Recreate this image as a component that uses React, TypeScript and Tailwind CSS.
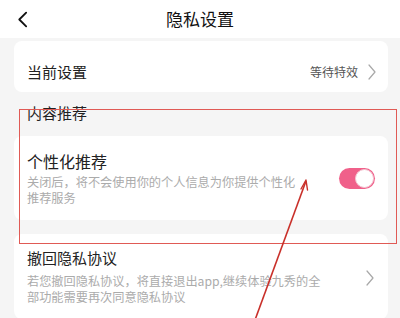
import { Fragment } from 'react';

const FONT = { fontFamily: '"Noto Sans CJK SC", "Noto Sans", sans-serif' };

const Chevron = ({ className }: { className: string }) => (
  <svg viewBox="0 0 8 16" className={className} fill="none">
    <path d="M1 1l6 7-6 7" stroke="#a8a8a8" strokeWidth="1.2" strokeLinecap="round" strokeLinejoin="round" />
  </svg>
);

const Toggle = ({ on }: { on: boolean }) => (
  <div
    className={`flex h-[21px] w-[36px] shrink-0 items-center rounded-full p-[1px] ${
      on ? 'justify-end bg-[#f0608a]' : 'justify-start bg-[#e5e5e5]'
    }`}
  >
    <div className="h-[19px] w-[19px] rounded-full border border-[#f3c7d3] bg-white" />
  </div>
);

export default function App() {
  return (
    <div style={FONT} className="relative h-[318px] w-[400px] overflow-hidden bg-[#f5f5f5]">
      {/* Header */}
      <div className="relative flex h-[38px] items-center justify-center bg-white">
        <svg viewBox="0 0 12 18" className="absolute left-[17px] top-[11px] h-[17px] w-[11px]" fill="none">
          <path d="M10 1.5L2.5 9l7.5 7.5" stroke="#111" strokeWidth="2" strokeLinecap="round" strokeLinejoin="round" />
        </svg>
        <span className="text-[17px] leading-[22px] text-[#111]">隐私设置</span>
      </div>

      <div className="pl-[14px] pr-[12px]">
        {/* Current setting */}
        <div className="mt-[3px] flex h-[51px] items-center justify-between rounded-[8px] bg-white pl-[13px] pr-[12px] pt-[10px]">
          <span className="text-[15px] leading-[20px] text-[#222]">当前设置</span>
          <div className="flex items-center gap-[10px]">
            <span className="text-[12px] leading-[16px] text-[#555]">等待特效</span>
            <Chevron className="h-[16px] w-[8px]" />
          </div>
        </div>

        <div className="mt-[11px] pl-[13px] text-[15px] leading-[20px] text-[#222]">内容推荐</div>

        {/* Personalised recommendation */}
        <div className="mt-[13px] flex items-center justify-between rounded-[8px] bg-white pb-[14px] pl-[13px] pr-[13px] pt-[14px]">
          <div>
            <div className="text-[16px] leading-[22px] text-[#222]">个性化推荐</div>
            <p className="mt-[2px] w-[274px] text-[12.2px] leading-[16px] text-[#ababab]">
              关闭后，将不会使用你的个人信息为你提供个性化推荐服务
            </p>
          </div>
          <Toggle on />
        </div>

        {/* Withdraw agreement */}
        <div className="mt-[14px] flex items-center justify-between rounded-[8px] bg-white pb-[14px] pl-[13px] pr-[14px] pt-[13px]">
          <div>
            <div className="text-[15px] leading-[22px] text-[#222]">撤回隐私协议</div>
            <p className="mt-[4px] w-[298px] text-[12.2px] leading-[16px] text-[#ababab]">
              若您撤回隐私协议，将直接退出app,继续体验九秀的全部功能需要再次同意隐私协议
            </p>
          </div>
          <Chevron className="mt-[4px] h-[16px] w-[8px]" />
        </div>
      </div>

      {/* Annotation overlay */}
      <Fragment>
        <div className="pointer-events-none absolute left-[19px] top-[109px] h-[135px] w-[378px] border-[1.5px] border-[#e05a55]" />
        <svg className="pointer-events-none absolute left-0 top-0 h-[318px] w-[400px]" viewBox="0 0 400 318" fill="none">
          <line x1="306" y1="181" x2="255" y2="320" stroke="#c9302a" strokeWidth="1.6" />
          <path d="M306 180l-5 9M306 180l1.5 10" stroke="#c9302a" strokeWidth="1.4" strokeLinecap="round" />
        </svg>
      </Fragment>
    </div>
  );
}
